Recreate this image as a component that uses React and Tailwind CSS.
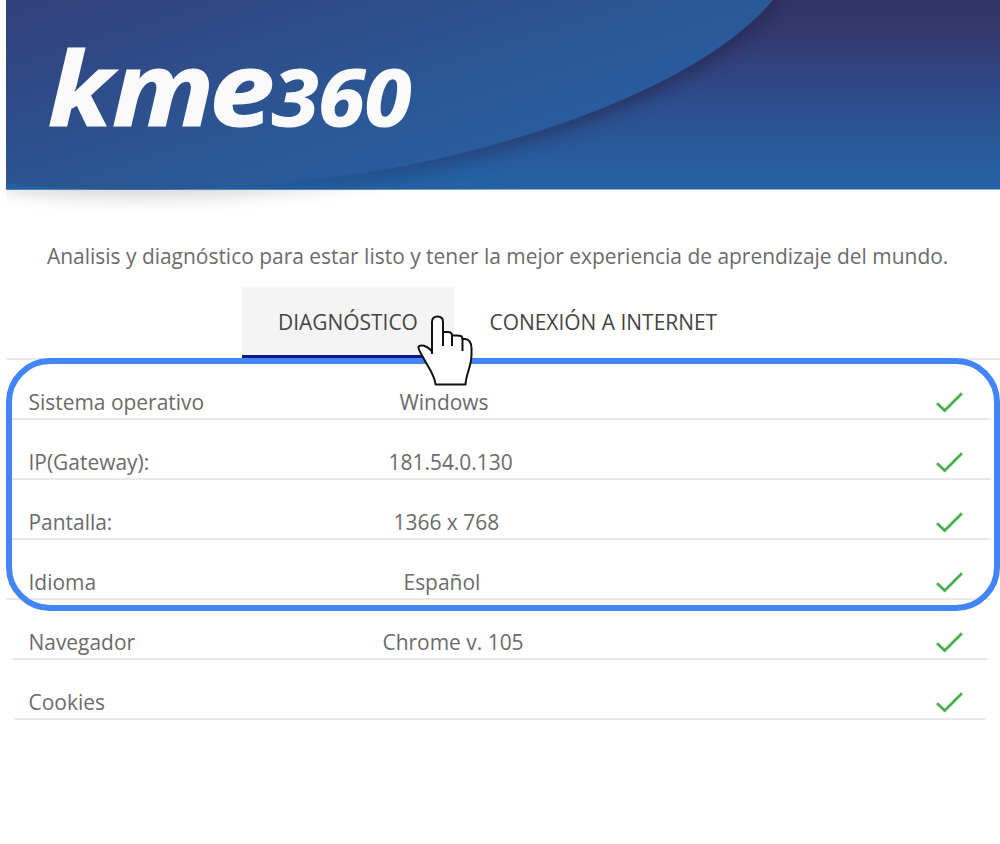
const rows = [
  { label: 'Sistema operativo', value: 'Windows', col: 'w-[371px]', line: 'left-[12px] right-[9px]' },
  { label: 'IP(Gateway):', value: '181.54.0.130', col: 'w-[360px]', line: 'left-[12px] right-[9px]' },
  { label: 'Pantalla:', value: '1366 x 768', col: 'w-[365px]', line: 'left-[12px] right-[9px]' },
  { label: 'Idioma', value: 'Español', col: 'w-[375px]', line: 'left-[6px] right-[9px]' },
  { label: 'Navegador', value: 'Chrome v. 105', col: 'w-[354px]', line: 'left-[13px] right-[13px]' },
  { label: 'Cookies', value: '', col: 'w-[354px]', line: 'left-[14px] right-[14px]' },
];

const Banner = () => (
  <svg className="block ml-[6px]" width="994" height="215" viewBox="6 0 994 215">
    <defs>
      <linearGradient id="back" x1="0" y1="0" x2="0" y2="1">
        <stop offset="0" stopColor="#333467" />
        <stop offset="0.15" stopColor="#34386d" />
        <stop offset="0.35" stopColor="#31427e" />
        <stop offset="0.6" stopColor="#2c5190" />
        <stop offset="0.85" stopColor="#285c9f" />
        <stop offset="1" stopColor="#2562a6" />
      </linearGradient>
      <linearGradient id="backLeft" x1="6" y1="0" x2="700" y2="0" gradientUnits="userSpaceOnUse">
        <stop offset="0" stopColor="#2260a2" />
        <stop offset="0.5" stopColor="#2260a2" stopOpacity="0.8" />
        <stop offset="0.75" stopColor="#2260a2" stopOpacity="0" />
      </linearGradient>
      <linearGradient id="front" x1="110" y1="-30" x2="215" y2="300" gradientUnits="userSpaceOnUse">
        <stop offset="0" stopColor="#32407b" />
        <stop offset="0.25" stopColor="#2f4a86" />
        <stop offset="0.55" stopColor="#2b5693" />
        <stop offset="0.8" stopColor="#295b9d" />
        <stop offset="1" stopColor="#2761a4" />
      </linearGradient>
      <linearGradient id="shade" x1="200" y1="0" x2="620" y2="0" gradientUnits="userSpaceOnUse">
        <stop offset="0" stopColor="#202044" stopOpacity="0" />
        <stop offset="0.5" stopColor="#202044" stopOpacity="0.3" />
        <stop offset="1" stopColor="#202044" stopOpacity="0.5" />
      </linearGradient>
      <filter id="blur" x="-10%" y="-20%" width="120%" height="150%" colorInterpolationFilters="sRGB">
        <feGaussianBlur stdDeviation="8" />
      </filter>
      <clipPath id="bar">
        <rect x="6" y="0" width="994" height="189.5" />
      </clipPath>
    </defs>
    <path
      d="M6 183C75 192 180 192 260 185C350 178 430 163 500 143C600 114 715 68 773 0H6Z"
      transform="translate(0 9)"
      fill="#000"
      fillOpacity="0.14"
      filter="url(#blur)"
    />
    <g clipPath="url(#bar)">
      <rect x="6" y="0" width="994" height="190" fill="url(#back)" />
      <rect x="6" y="160" width="694" height="30" fill="url(#backLeft)" />
      <path
        d="M6 183C75 192 180 192 260 185C350 178 430 163 500 143C600 114 715 68 773 0V-40H6Z"
        transform="translate(2 8)"
        fill="url(#shade)"
        filter="url(#blur)"
      />
      <path
        d="M6 183C75 192 180 192 260 185C350 178 430 163 500 143C600 114 715 68 773 0H6Z"
        fill="url(#front)"
      />
    </g>
    <g
      fill="#fafafa"
      stroke="#fafafa"
      strokeWidth="1.2"
      fontFamily='"Open Sans", sans-serif'
      fontWeight="700"
      fontStyle="italic"
    >
      <text x="48" y="126.3" fontSize="103" textLength="64" lengthAdjust="spacingAndGlyphs">k</text>
      <text x="112" y="126.3" fontSize="102" textLength="102" lengthAdjust="spacingAndGlyphs">m</text>
      <text x="209.5" y="126.3" fontSize="102" textLength="65" lengthAdjust="spacingAndGlyphs">e</text>
      <text x="272" y="126.3" fontSize="78" textLength="139" lengthAdjust="spacingAndGlyphs">360</text>
    </g>
  </svg>
);

const Check = () => (
  <svg className="absolute left-[935px] top-[31px]" width="30" height="24" viewBox="0 0 30 24" fill="none">
    <path d="M2 12.2L9.7 19.5L27 2.2" stroke="#4caf50" strokeWidth="2.8" />
  </svg>
);

const Hand = () => (
  <svg
    className="absolute left-[410px] top-[310px] z-20"
    width="70"
    height="80"
    viewBox="410 310 70 80"
    fill="#fff"
    stroke="#111"
    strokeWidth="2"
    strokeLinejoin="round"
    strokeLinecap="butt"
  >
    <path d="M435.6 384.5C434.5 375 428 367 424 359C422 355 418 350 418.5 346.5C420 344.5 427 345 432 351.5V322C432 318.5 434 316.5 437.5 316.5C441 316.5 443 318.5 443 322V332H448C451 332 452 333 452 335.5H457C461 335.5 462.5 336 462.5 339H465C469 339 471.5 343 471.5 348V355C471.5 366 466 374 465.5 384.5Z" />
    <path d="M432 349V354M443 331V346M452 334V346M462.5 338V351" fill="none" />
  </svg>
);

const App = () => {
  return (
    <div className="relative w-[1000px] h-[844px] overflow-hidden bg-white font-['Open_Sans',sans-serif] text-[20.95px] text-[#6b6b6b]">
      <Banner />

      <p className="ml-[47px] mt-[26px] h-[30px] leading-[30px] whitespace-nowrap">
        Analisis y diagnóstico para estar listo y tener la mejor experiencia de aprendizaje del mundo.
      </p>

      {/* Tabs */}
      <div className="ml-[6px] mt-[16px] h-[73px] pl-[236px] flex border-b-2 border-[#e8e8e8] text-[#444]">
        <div className="w-[212px] h-[71px] pl-[36px] bg-[#f4f4f4] border-b-[3px] border-[#10158c] leading-[70px] whitespace-nowrap">
          DIAGNÓSTICO
        </div>
        <div className="pl-[35.5px] leading-[70px] whitespace-nowrap">CONEXIÓN A INTERNET</div>
      </div>

      {/* Results */}
      <div>
        {rows.map((row) => (
          <div key={row.label} className="relative h-[60px] pl-[28.5px] pt-[27px] flex leading-[30px] whitespace-nowrap">
            <span className={`${row.col} shrink-0`}>{row.label}</span>
            <span>{row.value}</span>
            <Check />
            <div className={`absolute bottom-0 h-[2px] bg-[#e8e8e8] ${row.line}`} />
          </div>
        ))}
      </div>

      {/* Highlight frame */}
      <div className="absolute left-[6px] top-[358px] w-[994px] h-[253px] rounded-[44px] border-[6px] border-[#4285f4] z-10" />
      <Hand />
    </div>
  );
};

export default App;
